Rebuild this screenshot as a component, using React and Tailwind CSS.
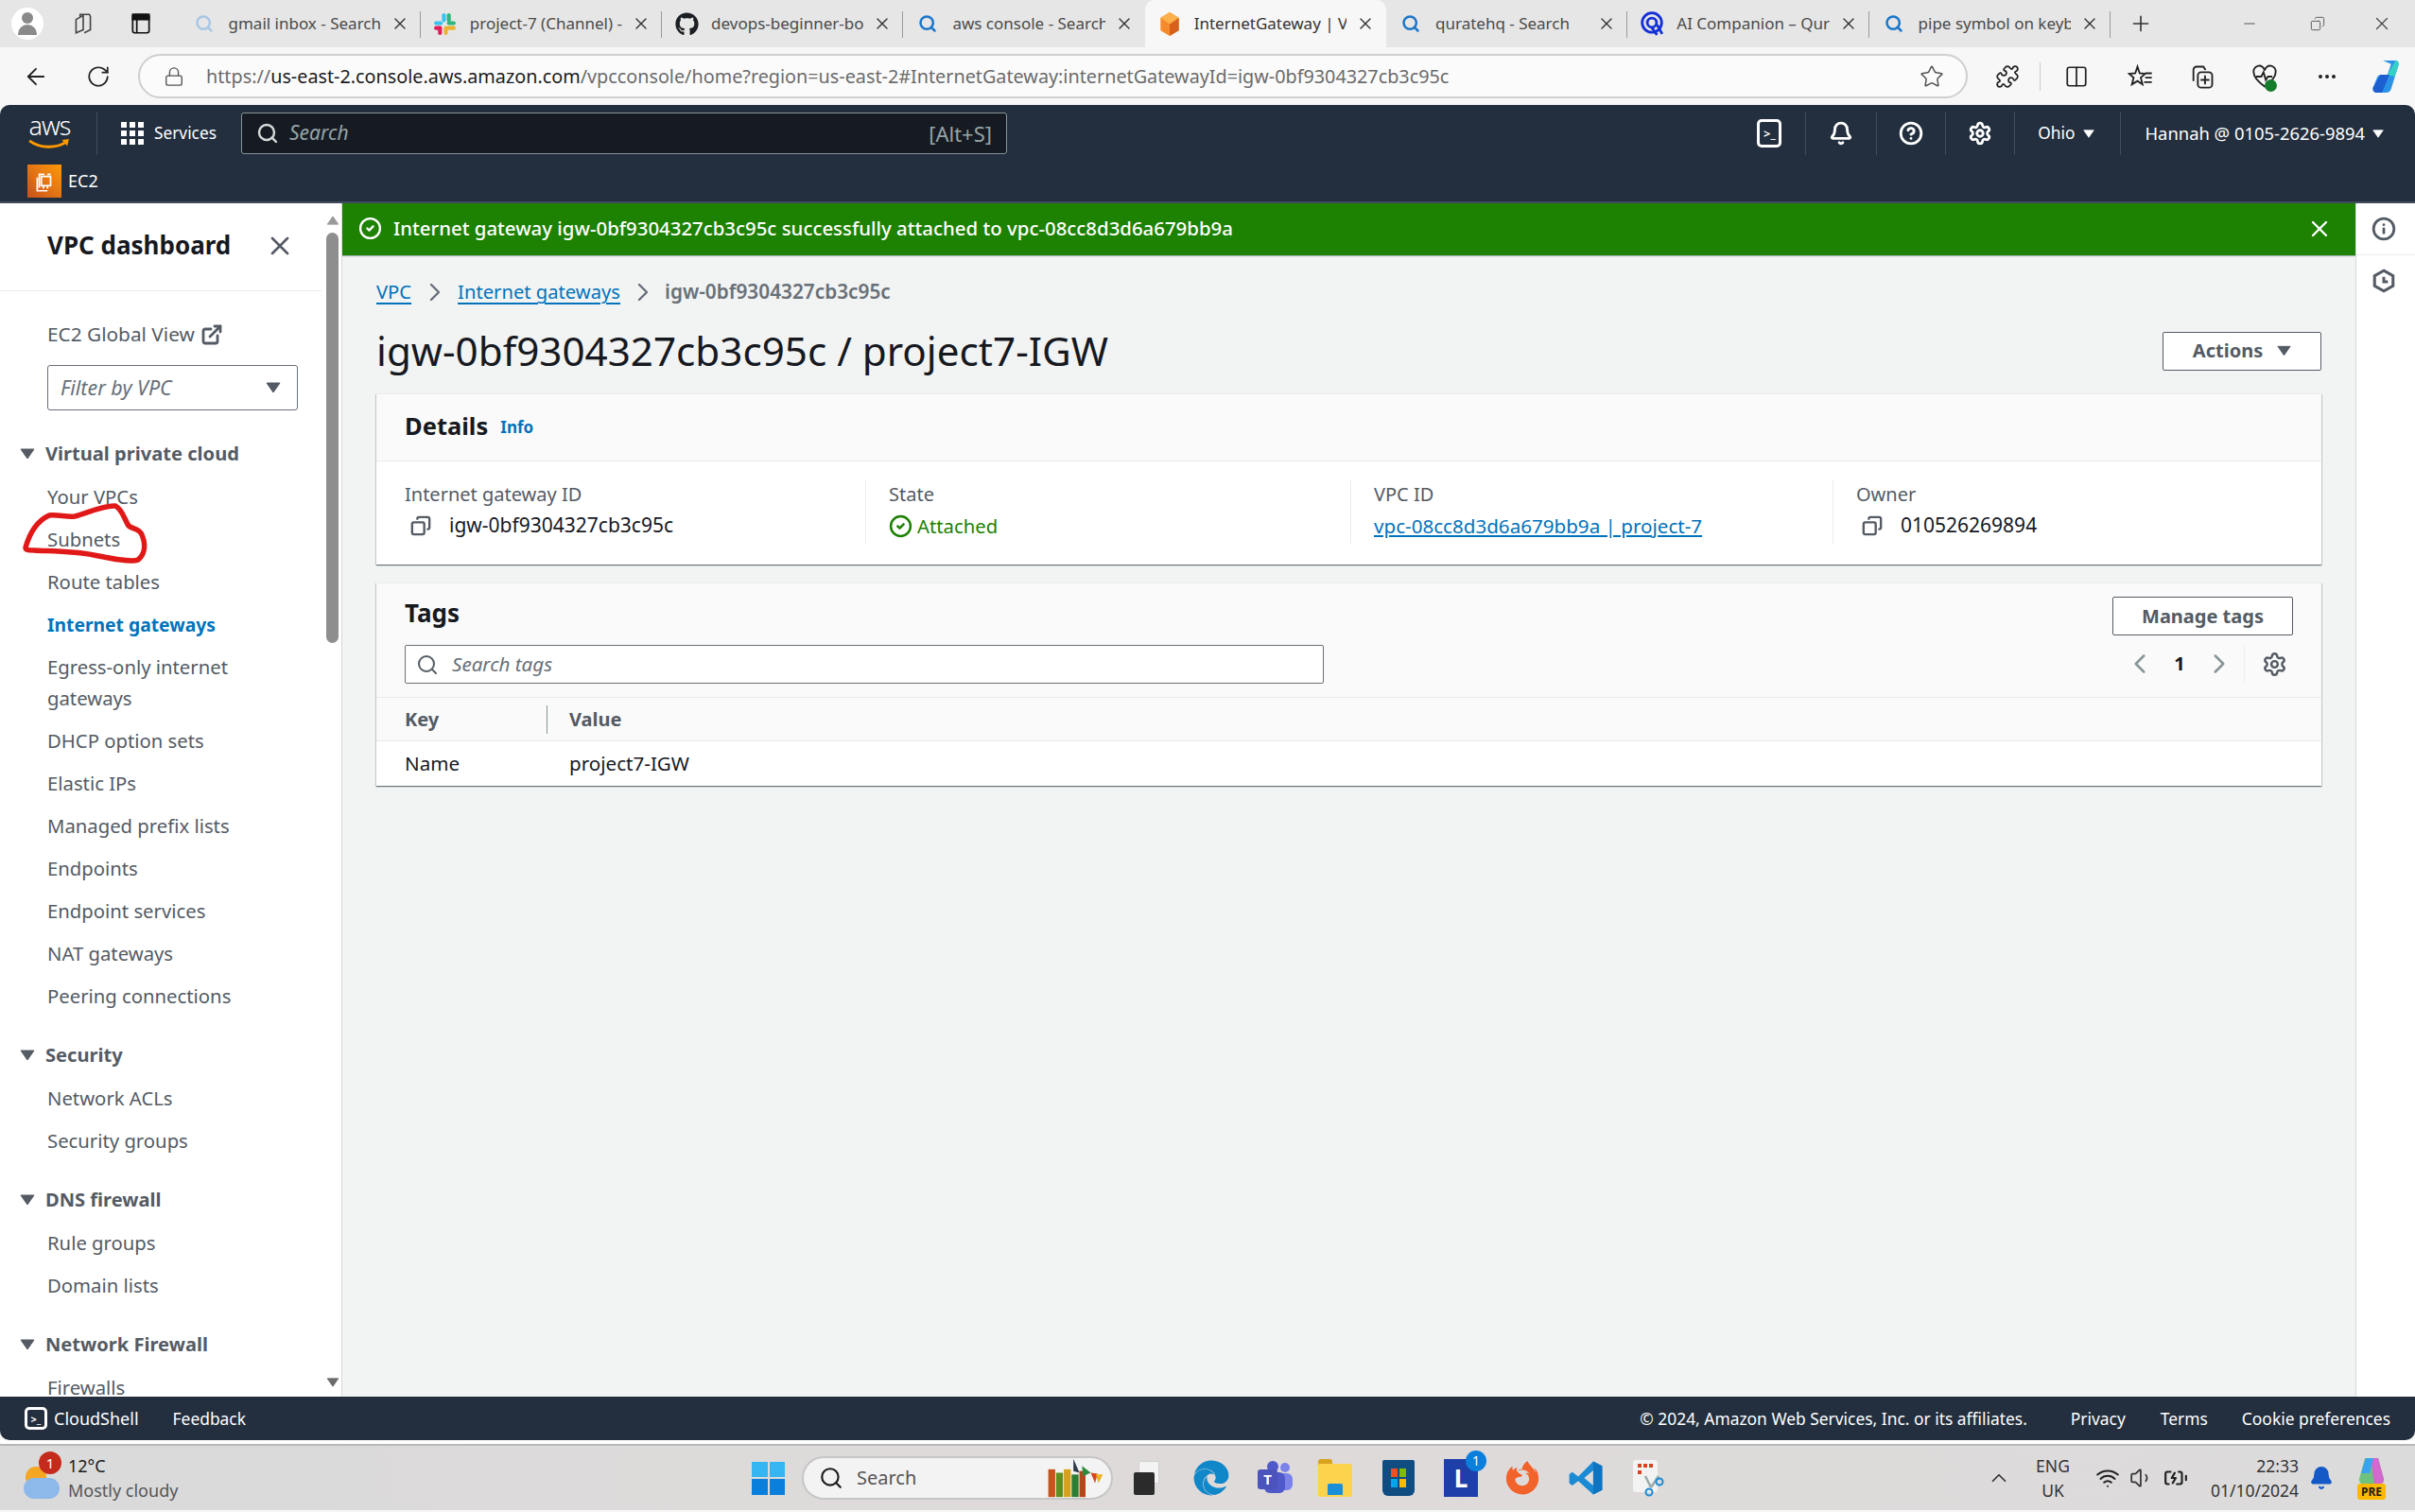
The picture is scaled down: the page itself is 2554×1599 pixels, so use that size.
import { ArrowLeft, RotateCw, Lock, Star, Puzzle, Columns2, Search, X, Plus, Minus, Copy, Settings, Bell, CircleHelp, CircleCheck, ChevronLeft, ChevronRight, ChevronUp, Ellipsis, Wifi, Volume1, BatteryCharging, ExternalLink, Info } from "lucide-react";
import { FaGithub, FaEdge, FaFirefoxBrowser } from "react-icons/fa";

const tabs = [
  { title: "gmail inbox - Search", icon: "search-faint" },
  { title: "project-7 (Channel) - Slack", icon: "slack" },
  { title: "devops-beginner-bootcamp", icon: "github" },
  { title: "aws console - Search", icon: "search" },
  { title: "InternetGateway | VPC Console", icon: "aws", active: true },
  { title: "quratehq - Search", icon: "search" },
  { title: "AI Companion – Qurate", icon: "qurate" },
  { title: "pipe symbol on keyboard", icon: "search" },
];

const sections = [
  {
    heading: "Virtual private cloud",
    items: ["Your VPCs", "Subnets", "Route tables", "Internet gateways", "Egress-only internet gateways", "DHCP option sets", "Elastic IPs", "Managed prefix lists", "Endpoints", "Endpoint services", "NAT gateways", "Peering connections"],
  },
  { heading: "Security", items: ["Network ACLs", "Security groups"] },
  { heading: "DNS firewall", items: ["Rule groups", "Domain lists"] },
  { heading: "Network Firewall", items: ["Firewalls"] },
];

function Caret({ className }) {
  return (
    <svg viewBox="0 0 16 12" className={className} fill="currentColor">
      <path d="M1 1h14L8 11z" stroke="currentColor" strokeLinejoin="round" />
    </svg>
  );
}

function TabIcon({ type }) {
  if (type === "search-faint") return <Search size={20} strokeWidth={3} className="text-[#a9c7e4]" />;
  if (type === "search") return <Search size={20} strokeWidth={3} className="text-[#1b76c9]" />;
  if (type === "github") return <FaGithub size={25} className="text-[#1b1f23]" />;
  if (type === "slack")
    return (
      <svg viewBox="0 0 24 24" className="w-[25px] h-[25px]">
        <rect x="9" y="1" width="4" height="9" rx="2" fill="#36c5f0" />
        <rect x="1" y="9" width="9" height="4" rx="2" fill="#36c5f0" />
        <rect x="14" y="9" width="9" height="4" rx="2" fill="#2eb67d" />
        <rect x="14" y="1" width="4" height="9" rx="2" fill="#2eb67d" />
        <rect x="11" y="14" width="4" height="9" rx="2" fill="#ecb22e" />
        <rect x="14" y="14" width="9" height="4" rx="2" fill="#ecb22e" />
        <rect x="5" y="14" width="4" height="9" rx="2" fill="#e01e5a" />
        <rect x="1" y="14" width="8" height="4" rx="2" fill="#e01e5a" />
      </svg>
    );
  if (type === "aws")
    return (
      <svg viewBox="0 0 24 28" className="w-[24px] h-[27px]">
        <path d="M12 1l10 6v14l-10 6-10-6V7z" fill="#f58a2c" />
        <path d="M12 14l10-7v14l-10 6z" fill="#d9601a" />
        <path d="M12 1l10 6-10 7-10-7z" fill="#fbb04a" />
      </svg>
    );
  return (
    <svg viewBox="0 0 24 24" className="w-[26px] h-[28px]" fill="none" stroke="#1430d6" strokeWidth="2.6">
      <circle cx="12" cy="11" r="9.5" />
      <circle cx="12" cy="11" r="4.5" />
      <path d="M12 16l5 7M17 13l5 9" />
    </svg>
  );
}

function BrowserTab({ tab, last }) {
  return (
    <div className={`relative w-[255.3px] h-full flex items-center pl-[12px] pr-[12px] ${tab.active ? "bg-[#f7f7f7] rounded-t-[10px]" : ""}`}>
      <div className="w-[28px] flex justify-center shrink-0">
        <TabIcon type={tab.icon} />
      </div>
      <span className={`ml-[12px] w-[165px] overflow-hidden whitespace-nowrap text-[17px] ${tab.active ? "text-[#333]" : "text-[#4a4a4a]"}`}>
        {tab.title}
      </span>
      <X size={20} strokeWidth={1.6} className="ml-[10px] text-[#333] shrink-0" />
      {!tab.active && !last && <span className="absolute right-0 top-[12px] h-[28px] w-px bg-[#9a9a9a]" />}
    </div>
  );
}

function TabStrip() {
  return (
    <div className="h-[50px] bg-[#e6e6e6] flex items-end shrink-0">
      <div className="w-[189.500px] h-full flex items-center shrink-0">
        <div className="ml-[12px] w-[34px] h-[34px] rounded-full bg-white flex flex-col items-center justify-center">
          <span className="w-[12px] h-[12px] rounded-full bg-[#8a8a8a]" />
          <span className="w-[20px] h-[11px] mt-px rounded-t-full bg-[#8a8a8a]" />
        </div>
        <svg viewBox="0 0 24 24" className="ml-[29px] w-[26px] h-[26px]" fill="none" stroke="#444" strokeWidth="1.5">
          <path d="M5 8l7-4v14l-7 3zM9 5V3h9l1 2v13l-6 3" />
        </svg>
        <svg viewBox="0 0 24 24" className="ml-[35px] w-[26px] h-[26px]" fill="none" stroke="#111" strokeWidth="1.6">
          <rect x="4" y="3" width="16" height="18" rx="2" />
          <rect x="4" y="3" width="16" height="5" fill="#111" />
          <path d="M8 8v13" />
        </svg>
      </div>
      <div className="flex h-full pt-0">
        {tabs.map((t, i) => (
          <BrowserTab key={t.title} tab={t} last={i === 3} />
        ))}
      </div>
      <div className="h-full flex items-center flex-1 min-w-0">
        <Plus size={26} strokeWidth={1.5} className="ml-[19px] text-[#333]" />
        <Minus size={18} strokeWidth={1.4} className="ml-[93px] text-[#555]" />
        <Copy size={16} strokeWidth={1.4} className="ml-[55px] text-[#555] -scale-x-100" />
        <X size={22} strokeWidth={1.3} className="ml-[49px] text-[#444]" />
      </div>
    </div>
  );
}

function AddressBar() {
  return (
    <div className="h-[61px] bg-[#f7f7f7] flex items-center shrink-0">
      <ArrowLeft size={28} strokeWidth={1.6} className="ml-[24px] text-[#222]" />
      <RotateCw size={26} strokeWidth={1.6} className="ml-[39px] text-[#222]" />
      <div className="ml-[29px] w-[1935px] h-[47px] rounded-full border-2 border-[#cfcfcf] bg-[#fbfbfb] flex items-center">
        <Lock size={22} strokeWidth={1.5} className="ml-[25px] text-[#555]" />
        <span className="ml-[23px] text-[19.800px] text-[#6b6b6b] whitespace-nowrap">
          https://<span className="text-[#1b1b1b]">us-east-2.console.aws.amazon.com</span>/vpcconsole/home?region=us-east-2#InternetGateway:internetGatewayId=igw-0bf9304327cb3c95c
        </span>
        <Star size={26} strokeWidth={1.4} className="ml-auto mr-[23px] text-[#555]" />
      </div>
      <Puzzle size={26} strokeWidth={1.6} className="ml-[29px] text-[#222]" />
      <span className="ml-[21px] h-[30px] w-px bg-[#ccc]" />
      <Columns2 size={26} strokeWidth={1.6} className="ml-[25px] text-[#222]" />
      <svg viewBox="0 0 24 24" className="ml-[41px] w-[28px] h-[28px]" fill="none" stroke="#222" strokeWidth="1.6">
        <path d="M9 3l2 6 5 .5-4 3.500 1.500 6L9 16l-5 3 1.500-6-4-3.500L7 9zM16 9h6M16 13h6M15 17h7" />
      </svg>
      <svg viewBox="0 0 24 24" className="ml-[37px] w-[28px] h-[28px]" fill="none" stroke="#222" strokeWidth="1.6">
        <path d="M4 16V6a3 3 0 013-3h6l2 3" />
        <rect x="8" y="8" width="13" height="14" rx="3" />
        <path d="M14.500 11v8M10.500 15h8" />
      </svg>
      <div className="relative ml-[38px] w-[28px] h-[28px]">
        <svg viewBox="0 0 24 24" className="w-full h-full" fill="none" stroke="#222" strokeWidth="1.6">
          <path d="M12 21C5 16 2 12 2 8a5 5 0 0110-1.500A5 5 0 0122 8c0 4-3 8-10 13zM4 12h5l2-4 2 7 2-3h4" />
        </svg>
        <span className="absolute right-[1px] bottom-[-2px] w-[13px] h-[13px] rounded-full bg-[#167c2c]" />
      </div>
      <Ellipsis size={24} strokeWidth={2} className="ml-[40px] text-[#222]" />
      <svg viewBox="0 0 30 40" className="ml-[35px] w-[30px] h-[38px]">
        <path d="M12 2h14c3 0 4 3 3 6l-8 26c-1 3-3 4-6 4H6c-4 0-6-3-5-6l4-10c1-3 3-4 6-4h6l4-12z" fill="#2a93e8" />
        <path d="M17 18l9-16c3 0 4 3 3 6l-4 12z" fill="#35d0c6" />
        <path d="M1 32l8-14h10l-8 20H6c-4 0-6-3-5-6z" fill="#1d5fd1" />
      </svg>
    </div>
  );
}

function ShellIcon({ box, glyph }) {
  return (
    <div className={`${box} border-[3px] border-white rounded-[5px] flex items-center justify-center`}>
      <span className={`${glyph} font-bold leading-none text-white`}>{">_"}</span>
    </div>
  );
}

function AwsHeader() {
  return (
    <div className="h-[104px] bg-[#232f3e] rounded-t-[10px] border-b-2 border-[#414d5c] shrink-0">
      <div className="h-[60px] flex items-center">
        <div className="ml-[29px] w-[47px] h-[44px] relative flex flex-col items-center">
          <span className="text-[27px] leading-[28px] text-white font-light tracking-[-1px]">aws</span>
          <svg viewBox="0 0 48 14" className="w-[47px] h-[13px]">
            <path d="M1 2c12 9 31 9 42 1" fill="none" stroke="#f90" strokeWidth="3" />
            <path d="M38 1l8-1-2 8z" fill="#f90" />
          </svg>
        </div>
        <span className="ml-[26px] w-px h-[46px] bg-[#414d5c]" />
        <div className="ml-[25px] grid grid-cols-3 gap-[3px] w-[24px]">
          {[...Array(9)].map((_, i) => (
            <span key={i} className="w-[6px] h-[6px] bg-white" />
          ))}
        </div>
        <span className="ml-[11px] w-[68px] text-[17.300px] text-white">Services</span>
        <div className="ml-[24px] w-[810px] h-[44px] bg-[#161b23] border border-[#879596] rounded-[3px] flex items-center">
          <Search size={24} strokeWidth={2.4} className="ml-[15px] text-[#d5dbdb]" />
          <span className="ml-[11px] text-[21px] italic text-[#95a5a6]">Search</span>
          <span className="ml-auto mr-[15px] text-[22px] text-[#95a5a6]">[Alt+S]</span>
        </div>
        <div className="ml-auto flex items-center h-[46px] text-white">
          <div className="mr-[25px]">
            <ShellIcon box="w-[26px] h-[30px]" glyph="text-[13px]" />
          </div>
          <span className="w-px h-[46px] bg-[#414d5c]" />
          <Bell size={26} strokeWidth={2.6} className="mx-[24px]" />
          <span className="w-px h-[46px] bg-[#414d5c]" />
          <CircleHelp size={26} strokeWidth={2.6} className="mx-[23px]" />
          <span className="w-px h-[46px] bg-[#414d5c]" />
          <Settings size={26} strokeWidth={2.6} className="mx-[23px]" />
          <span className="w-px h-[46px] bg-[#414d5c]" />
          <span className="ml-[24px] text-[17.300px]">Ohio</span>
          <Caret className="ml-[9px] mr-[27px] w-[12px] h-[11px]" />
          <span className="w-px h-[46px] bg-[#414d5c]" />
          <span className="ml-[25px] text-[18.400px]">Hannah @ 0105-2626-9894</span>
          <Caret className="ml-[8px] mr-[33px] w-[12px] h-[11px]" />
        </div>
      </div>
      <div className="h-[42px] pt-[3px] flex items-start">
        <div className="ml-[29px] w-[36px] h-[35px] bg-gradient-to-tr from-[#c8511b] to-[#f90] flex items-center justify-center">
          <svg viewBox="0 0 24 24" className="w-[26px] h-[26px]" fill="none" stroke="#fff" strokeWidth="1.6">
            <rect x="9" y="7" width="9" height="9" />
            <path d="M7 18V5h5M5 8v13h10M18 5h-3M11 16v3M15 16v3" />
          </svg>
        </div>
        <span className="ml-[7px] mt-[4px] text-[18px] text-white">EC2</span>
      </div>
    </div>
  );
}

function Sidebar() {
  return (
    <aside className="relative w-[362px] shrink-0 bg-white flex overflow-hidden">
      <div className="w-[342px] h-full shrink-0 overflow-hidden">
        <div className="h-[93px] flex items-center border-b border-[#eaeded] pl-[50px] pb-[3px] w-[340px]">
          <span className="text-[26px] font-bold text-[#16191f]">VPC dashboard</span>
          <X size={32} strokeWidth={2} className="ml-auto mr-[28px] text-[#545b64]" />
        </div>
        <div className="mt-[23px] h-[45px] pl-[50px] flex items-center text-[20.800px] text-[#545b64]">
          EC2 Global View
          <ExternalLink size={24} strokeWidth={2.8} className="ml-[6px]" />
        </div>
        <div className="ml-[50px] mt-[10px] w-[265px] h-[48px] border border-[#687078] rounded-[3px] flex items-center pl-[13px] pr-[17px]">
          <span className="italic text-[21.500px] text-[#687078]">Filter by VPC</span>
          <Caret className="ml-auto w-[16px] h-[12px] text-[#545b64]" />
        </div>
        <div className="mt-[22.500px]">
          {sections.map((s, i) => (
            <div key={s.heading} className={i > 0 ? "mt-[16.500px]" : ""}>
              <div className="h-[46.500px] flex items-center pl-[21px]">
                <Caret className="w-[16px] h-[12px] text-[#545b64]" />
                <span className="ml-[11px] text-[20.100px] font-bold text-[#545b64]">{s.heading}</span>
              </div>
              {s.items.map((item) => {
                const active = item === "Internet gateways";
                const tall = item.startsWith("Egress");
                return (
                  <div key={item} className={`pl-[50px] pr-[60px] flex items-center leading-[33px] ${tall ? "h-[78px]" : "h-[45px]"} ${active ? "text-[19.300px] font-bold text-[#0073bb]" : "text-[20.300px] text-[#545b64]"}`}>
                    {item}
                  </div>
                );
              })}
            </div>
          ))}
        </div>
      </div>
      {/* scrollbar */}
      <div className="w-[20px] h-full flex flex-col items-center pt-[13px] pb-[10px] border-r border-[#d8d8d8]">
        <Caret className="w-[14px] h-[10px] rotate-180 text-[#9a9a9a]" />
        <div className="mt-[8px] w-[13px] h-[434px] rounded-full bg-[#8e8e8e]" />
        <Caret className="mt-auto w-[14px] h-[10px] text-[#6a6a6a]" />
      </div>
      {/* red pen circle around Subnets */}
      <svg viewBox="0 0 362 1262" className="absolute left-0 top-0 w-[362px] h-[1262px] pointer-events-none" fill="none">
        <path
          transform="translate(-1 -5)"
          d="M28 369C32 355 40 341 53 335C62 334 72 337 80 336C90 334 110 324 123 325C130 328 133 340 137 346C142 350 150 349 152 358C156 370 152 378 147 382C140 385 120 381 100 377C80 373 55 373 37 372C32 372 28 372 28 369Z"
          stroke="#e01818"
          strokeWidth="5.5"
          strokeLinejoin="round"
        />
      </svg>
    </aside>
  );
}

function CopyIcon() {
  return <Copy size={22} strokeWidth={2.6} className="text-[#545b64] -scale-x-100" />;
}

function Card({ children }) {
  return (
    <section className="bg-white border-t border-[#eaeded] shadow-[0_1px_1px_0_rgba(0,28,36,0.45),1px_1px_1px_0_rgba(0,28,36,0.12),-1px_1px_1px_0_rgba(0,28,36,0.12)]">
      {children}
    </section>
  );
}

function Field({ label, children, first }) {
  return (
    <div className={`h-[67px] ${first ? "pl-0" : "border-l border-[#eaeded] pl-[24px]"}`}>
      <div className="text-[20px] leading-[30px] text-[#545b64]">{label}</div>
      <div className="mt-[2px] h-[32px] flex items-center text-[21px] text-[#16191f]">{children}</div>
    </div>
  );
}

function MainContent() {
  return (
    <main className="flex-1 min-w-0 bg-[#f2f3f3] flex flex-col">
      <div className="h-[55px] bg-[#1d8102] flex items-center text-white shrink-0 pb-[2px] shadow-[0_1px_1px_rgba(0,28,36,0.3)]">
        <CircleCheck size={25} strokeWidth={2.2} className="ml-[17px]" />
        <span className="ml-[12px] text-[20.400px] font-medium">Internet gateway igw-0bf9304327cb3c95c successfully attached to vpc-08cc8d3d6a679bb9a</span>
        <X size={28} strokeWidth={2} className="ml-auto mr-[24px]" />
      </div>
      <div className="px-[36px]">
        <nav className="mt-[19px] h-[39px] flex items-center text-[20.200px]">
          <span className="text-[#0073bb] underline underline-offset-4">VPC</span>
          <ChevronRight size={32} strokeWidth={1.8} className="mx-[8.500px] text-[#687078]" />
          <span className="text-[#0073bb] underline underline-offset-4">Internet gateways</span>
          <ChevronRight size={32} strokeWidth={1.8} className="mx-[7.500px] text-[#687078]" />
          <span className="text-[20.800px] font-semibold text-[#687078]">igw-0bf9304327cb3c95c</span>
        </nav>
        <div className="mt-[13px] h-[60px] flex items-center justify-between">
          <h1 className="text-[42.200px] text-[#16191f]">igw-0bf9304327cb3c95c / project7-IGW</h1>
          <button className="w-[168px] h-[41px] bg-white border border-[#545b64] rounded-[2px] flex items-center justify-center text-[20px] font-bold text-[#545b64]">
            Actions
            <Caret className="ml-[15px] w-[15px] h-[12px]" />
          </button>
        </div>
        <div className="mt-[15px]">
          <Card>
            <div className="h-[71px] bg-[#fafafa] border-b border-[#eaeded] pl-[30px] pb-[4px] flex items-center">
              <span className="text-[25.500px] font-bold text-[#16191f]">Details</span>
              <span className="ml-[13px] mt-[4px] text-[17px] font-bold text-[#0073bb]">Info</span>
            </div>
            <div className="h-[109px] px-[30px] pt-[20px] grid grid-cols-[487px_513px_510px_1fr]">
              <Field label="Internet gateway ID" first>
                <span className="ml-[6px]"><CopyIcon /></span>
                <span className="ml-[19px]">igw-0bf9304327cb3c95c</span>
              </Field>
              <Field label="State">
                <CircleCheck size={25} strokeWidth={2.4} className="text-[#1d8102]" />
                <span className="ml-[5px] text-[20.300px] text-[#1d8102]">Attached</span>
              </Field>
              <Field label="VPC ID">
                <span className="text-[20.600px] text-[#0073bb] underline underline-offset-2">vpc-08cc8d3d6a679bb9a | project-7</span>
              </Field>
              <Field label="Owner">
                <span className="ml-[6px]"><CopyIcon /></span>
                <span className="ml-[19px]">010526269894</span>
              </Field>
            </div>
          </Card>
        </div>
        <div className="mt-[19px]">
          <Card>
            <div className="h-[121px] bg-[#fafafa] border-b border-[#eaeded] px-[30px] flex justify-between">
              <div className="flex-1">
                <div className="h-[44px] mt-[9px] flex items-center text-[26px] font-bold text-[#16191f]">Tags</div>
                <div className="mt-[12px] w-[972px] h-[41px] bg-white border border-[#687078] rounded-[2px] flex items-center">
                  <Search size={24} strokeWidth={2} className="ml-[11px] text-[#545b64]" />
                  <span className="ml-[14px] italic text-[20.600px] text-[#687078]">Search tags</span>
                </div>
              </div>
              <div className="flex flex-col items-end mt-[14px]">
                <button className="w-[191px] h-[41px] bg-white border border-[#545b64] rounded-[2px] text-[20px] font-bold text-[#545b64]">Manage tags</button>
                <div className="mt-[10px] h-[40px] flex items-center">
                  <ChevronLeft size={34} strokeWidth={1.8} className="text-[#879596]" />
                  <span className="w-[50px] text-center text-[20px] font-bold text-[#16191f]">1</span>
                  <ChevronRight size={34} strokeWidth={1.8} className="text-[#879596]" />
                  <span className="ml-[9px] w-px h-[40px] bg-[#eaeded]" />
                  <Settings size={27} strokeWidth={2.2} className="ml-[18px] mr-[6px] text-[#545b64]" />
                </div>
              </div>
            </div>
            <div className="h-[46px] bg-[#fafafa] border-b border-[#eaeded] flex items-center pl-[30px] text-[20px] font-bold text-[#545b64]">
              <span className="w-[150px]">Key</span>
              <span className="h-[30px] border-l border-[#879596] pl-[23px] leading-[30px]">Value</span>
            </div>
            <div className="h-[47px] flex items-center pl-[30px] text-[20.600px] text-[#16191f]">
              <span className="w-[174px]">Name</span>
              <span>project7-IGW</span>
            </div>
          </Card>
        </div>
      </div>
    </main>
  );
}

function RightRail() {
  return (
    <div className="w-[63px] shrink-0 bg-white border-l border-[#d5dbdb] pr-[4px]">
      <div className="h-[55px] border-b border-[#eaeded] -mr-[4px] pr-[4px] flex items-center justify-center">
        <Info size={26} strokeWidth={2.6} className="text-[#545b64]" />
      </div>
      <div className="mt-[13px] flex justify-center">
        <svg viewBox="0 0 24 24" className="w-[26px] h-[28px]" fill="none" stroke="#545b64" strokeWidth="2.8">
          <path d="M12 2l9 5v10l-9 5-9-5V7z" />
          <path d="M12 8v5h4" />
        </svg>
      </div>
    </div>
  );
}

function Footer() {
  return (
    <div className="h-[46px] bg-[#232f3e] rounded-b-[10px] flex items-center text-[17.400px] text-white shrink-0">
      <div className="ml-[26px]">
        <ShellIcon box="w-[24px] h-[24px]" glyph="text-[11px]" />
      </div>
      <span className="ml-[7px] text-[18px]">CloudShell</span>
      <span className="ml-[36px]">Feedback</span>
      <span className="ml-auto">© 2024, Amazon Web Services, Inc. or its affiliates.</span>
      <span className="ml-[46px]">Privacy</span>
      <span className="ml-[37px]">Terms</span>
      <span className="ml-[36px] mr-[26px]">Cookie preferences</span>
    </div>
  );
}

function Taskbar() {
  return (
    <div className="h-[70px] bg-gradient-to-r from-[#dadada] via-[#dfdada] to-[#dcdbdb] border-t-2 border-[#b8b8b8] flex items-center shrink-0">
      <div className="relative ml-[25px] w-[38px] h-[44px]">
        <span className="absolute left-[2px] top-[10px] w-[22px] h-[22px] rounded-full bg-[#f5a623]" />
        <span className="absolute left-0 bottom-0 w-[38px] h-[22px] rounded-full bg-[#8db8ea]" />
        <span className="absolute left-[16px] top-[-6px] w-[24px] h-[24px] rounded-full bg-[#c42b1c] text-white text-[15px] leading-[24px] text-center">1</span>
      </div>
      <div className="ml-[9px] w-[130px] text-[18px] leading-[26px]">
        <div className="text-[#1b1b1b]">12°C</div>
        <div className="text-[#555]">Mostly cloudy</div>
      </div>
      <div className="ml-[593px] w-[35px] h-[35px] grid grid-cols-2 gap-[2px]">
        <span className="bg-[#35b6f3]" />
        <span className="bg-[#35b6f3]" />
        <span className="bg-[#0a7fdc]" />
        <span className="bg-[#0a7fdc]" />
      </div>
      <div className="ml-[18px] w-[329px] h-[46px] rounded-full bg-[#f3f3f3] border-2 border-[#c6c6c6] flex items-center">
        <Search size={26} strokeWidth={2} className="ml-[16px] text-[#1b1b1b]" />
        <span className="ml-[14px] text-[20px] text-[#555]">Search</span>
        <svg viewBox="0 0 64 48" className="ml-auto mr-[6px] w-[64px] h-[44px]">
          <rect x="1" y="14" width="8" height="32" fill="#c8531c" />
          <rect x="10" y="18" width="8" height="28" fill="#5f8f1e" />
          <rect x="19" y="14" width="8" height="32" fill="#d6a21e" />
          <rect x="28" y="20" width="8" height="26" fill="#2d7d32" />
          <rect x="37" y="16" width="7" height="30" fill="#b5471c" />
          <path d="M30 2l7 16-7-2z" fill="#2f3b4a" />
          <path d="M40 10l10 8-9 4z" fill="#2d8a3a" />
          <path d="M50 18l5 12 3-11z" fill="#d9431e" />
          <path d="M56 20l8 0-5 10z" fill="#e9b31e" />
        </svg>
      </div>
      <div className="relative ml-[21px] w-[32px] h-[36px]">
        <span className="absolute right-[4px] top-0 w-[22px] h-[24px] rounded-[2px] bg-[#f3f3f3] border border-[#d0d0d0]" />
        <span className="absolute left-[1px] bottom-0 w-[22px] h-[24px] rounded-[2px] bg-[#2b2b2b]" />
      </div>
      <FaEdge size={38} className="ml-[32px] text-[#0f87c9]" />
      <svg viewBox="0 0 40 36" className="ml-[29px] w-[40px] h-[36px]">
        <circle cx="30" cy="7" r="5" fill="#7b83eb" />
        <rect x="22" y="13" width="16" height="18" rx="6" fill="#7b83eb" />
        <circle cx="17" cy="6" r="6" fill="#5059c9" />
        <rect x="8" y="12" width="22" height="22" rx="6" fill="#5059c9" />
        <rect x="1" y="9" width="21" height="21" rx="3" fill="#4b53bc" />
        <text x="11.500" y="25" textAnchor="middle" fontSize="15" fontWeight="700" fill="#fff">T</text>
      </svg>
      <div className="relative ml-[25px] w-[36px] h-[40px]">
        <span className="absolute left-0 top-0 w-[15px] h-[8px] rounded-t-[3px] bg-[#d9a31e]" />
        <span className="absolute inset-x-0 top-[5px] bottom-0 rounded-[2px] bg-[#fcd34d]" />
        <span className="absolute left-[10px] right-[10px] bottom-[2px] h-[12px] rounded-t-[2px] bg-[#1a8fd8]" />
      </div>
      <div className="relative ml-[32px] w-[34px] h-[38px] rounded-b-[6px] rounded-t-[2px] bg-[#0f4c81] grid grid-cols-2 gap-[2px] p-[9px]">
        <span className="bg-[#f25022]" />
        <span className="bg-[#7fba00]" />
        <span className="bg-[#00a4ef]" />
        <span className="bg-[#ffb900]" />
      </div>
      <div className="relative ml-[31px] w-[36px] h-[40px] bg-[#1e3fa8] flex items-center justify-center">
        <span className="text-white text-[26px] font-bold leading-none">L</span>
        <span className="absolute right-[-9px] top-[-9px] w-[22px] h-[22px] rounded-full bg-[#0a7fdc] text-white text-[14px] leading-[22px] text-center">1</span>
      </div>
      <FaFirefoxBrowser size={36} className="ml-[29px] text-[#f2622b]" />
      <svg viewBox="0 0 24 24" className="ml-[30px] w-[38px] h-[38px]">
        <path d="M17 1l6 3v16l-6 3-10-9-4 3-2-1.500V9.500L3 8l4 3z" fill="#1a8ad4" />
        <path d="M17 7v10l-6-5z" fill="#dcdbdb" />
        <path d="M17 1l6 3v16l-6 3z" fill="#0f74c0" />
      </svg>
      <svg viewBox="0 0 36 40" className="ml-[30px] w-[36px] h-[40px]">
        <rect x="1" y="1" width="26" height="34" rx="3" fill="#f3f3f3" />
        <rect x="6" y="5" width="4" height="4" fill="#d9431e" />
        <rect x="12" y="5" width="4" height="4" fill="#d9431e" />
        <rect x="18" y="5" width="4" height="4" fill="#d9431e" />
        <rect x="6" y="12" width="4" height="4" fill="#d9431e" />
        <path d="M14 18l6 12M28 18l-8 12" stroke="#9aa" strokeWidth="2.500" />
        <circle cx="18" cy="35" r="3.500" fill="none" stroke="#1a8ad4" strokeWidth="2" />
        <circle cx="29" cy="24" r="3.500" fill="none" stroke="#1a8ad4" strokeWidth="2" />
      </svg>
      <ChevronUp size={26} strokeWidth={1.6} className="ml-[339px] text-[#333]" />
      <div className="ml-[22px] w-[44px] text-center text-[17.500px] leading-[26px] text-[#333]">
        <div>ENG</div>
        <div>UK</div>
      </div>
      <Wifi size={26} strokeWidth={1.8} className="ml-[23px] text-[#222]" />
      <Volume1 size={26} strokeWidth={1.6} className="ml-[10px] text-[#333]" />
      <BatteryCharging size={26} strokeWidth={2} className="ml-[10px] text-[#222]" />
      <div className="ml-[20px] w-[97px] text-right text-[17.500px] leading-[26px] text-[#333]">
        <div>22:33</div>
        <div>01/10/2024</div>
      </div>
      <Bell size={26} strokeWidth={2} className="ml-[11px] text-[#1459c7] fill-[#1459c7]" />
      <div className="relative ml-[22px] w-[36px] h-[46px]">
        <svg viewBox="0 0 30 34" className="w-[30px] h-[34px] ml-[3px]">
          <path d="M8 2h14l6 22c0 4-2 6-6 6H8c-4 0-6-2-6-6z" fill="#6fc17e" />
          <path d="M14 2h8l6 22c0 4-2 6-6 6h-4z" fill="#d368cf" />
          <path d="M9 2h8l-4 16H4z" fill="#39a3f0" />
        </svg>
        <span className="absolute left-[3px] bottom-0 w-[30px] h-[17px] rounded-[3px] bg-[#fbb900] text-[12px] font-bold leading-[17px] text-center text-[#1b1b1b]">PRE</span>
      </div>
    </div>
  );
}

export default function App() {
  return (
    <div className="w-[2554px] h-[1599px] overflow-hidden bg-[#f7f7f7] flex flex-col font-['Noto_Sans',sans-serif]">
      <TabStrip />
      <AddressBar />
      <AwsHeader />
      <div className="h-[1262px] flex overflow-hidden shrink-0">
        <Sidebar />
        <MainContent />
        <RightRail />
      </div>
      <Footer />
      <div className="h-[4px] shrink-0 bg-white" />
      <Taskbar />
    </div>
  );
}
